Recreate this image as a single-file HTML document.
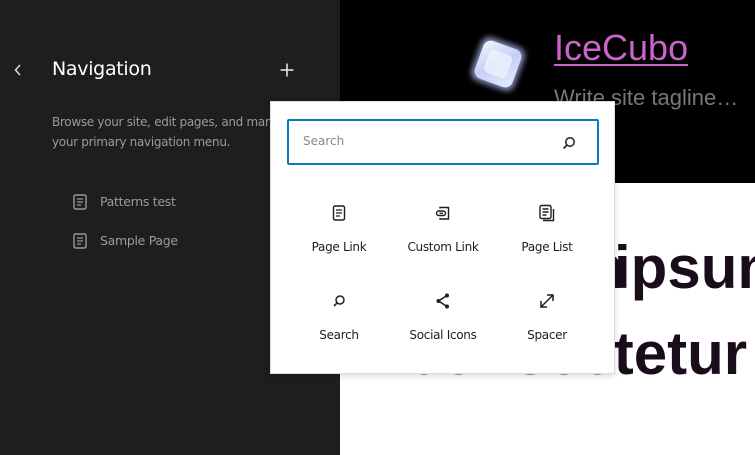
<!DOCTYPE html>
<html><head><meta charset="utf-8"><style>
*{margin:0;padding:0;box-sizing:border-box}
body{width:755px;height:455px;overflow:hidden;position:relative;background:#1e1e1e;font-family:"DejaVu Sans","Liberation Sans",sans-serif}
.a{position:absolute}
.side{left:0;top:0;width:340px;height:455px;background:#1e1e1e}
.hdr{left:340px;top:0;width:415px;height:183px;background:#000}
.main{left:340px;top:183px;width:415px;height:272px;background:#fff;overflow:hidden}
.big{font-family:"Liberation Sans",sans-serif;font-weight:bold;font-size:60px;color:#1a0d1a;white-space:nowrap}
.pop{left:270px;top:101px;width:345px;height:273px;background:#fff;border:1px solid #ddd;box-shadow:0 2px 6px rgba(0,0,0,.15)}
.sb{left:16px;top:17px;width:312px;height:46px;border:2px solid #0a7cbd;border-radius:2px}
.it{width:104px;text-align:center;font-size:12px;color:#1e1e1e;letter-spacing:-.3px}
.it svg{display:block;margin:0 auto 18px}
</style></head><body>
<div class="a side">
 <svg class="a" style="left:10px;top:62px" width="16" height="16" viewBox="0 0 16 16"><path d="M10 3 L5.5 8 L10 13" fill="none" stroke="#ddd" stroke-width="1.5"/></svg>
 <div class="a" style="left:52px;top:58px;font-size:19px;color:#fff;letter-spacing:-.3px">Navigation</div>
 <svg class="a" style="left:279px;top:62px" width="16" height="16" viewBox="0 0 16 16"><path d="M8 1.5V14.5M1.5 8H14.5" stroke="#eee" stroke-width="1.5"/></svg>
 <div class="a" style="left:52px;top:112px;font-size:12px;line-height:20px;color:#9a9a9a;white-space:nowrap;letter-spacing:-.3px">Browse your site, edit pages, and manage<br>your primary navigation menu.</div>
 <svg class="a" style="left:73px;top:194px" width="14" height="16" viewBox="0 0 14 16"><rect x="1" y="1" width="12" height="14" rx="1.5" fill="none" stroke="#999" stroke-width="1.4"/><path d="M4 5H10M4 8H10M4 11H8" stroke="#999" stroke-width="1.3"/></svg>
 <div class="a" style="left:100px;top:194px;font-size:12.5px;color:#9a9a9a;letter-spacing:-.3px">Patterns test</div>
 <svg class="a" style="left:73px;top:233px" width="14" height="16" viewBox="0 0 14 16"><rect x="1" y="1" width="12" height="14" rx="1.5" fill="none" stroke="#999" stroke-width="1.4"/><path d="M4 5H10M4 8H10M4 11H8" stroke="#999" stroke-width="1.3"/></svg>
 <div class="a" style="left:100px;top:233px;font-size:12.5px;color:#9a9a9a;letter-spacing:-.3px">Sample Page</div>
</div>
<div class="a hdr">
 <svg class="a" style="left:126px;top:32px" width="64" height="64" viewBox="0 0 64 64"><defs><filter id="g"><feGaussianBlur stdDeviation="3"/></filter><linearGradient id="l" x1="0" y1="0" x2="1" y2="1"><stop offset="0" stop-color="#f2f5ff"/><stop offset=".5" stop-color="#c4cff5"/><stop offset="1" stop-color="#e8edff"/></linearGradient></defs><g transform="rotate(20 32 32)"><rect x="9" y="9" width="46" height="46" rx="9" fill="#b8c4ff" filter="url(#g)" opacity=".7"/><rect x="12" y="12" width="40" height="40" rx="8" fill="url(#l)"/><rect x="20" y="20" width="24" height="24" rx="5" fill="#f4f6ff" opacity=".7"/></g></svg>
 <div class="a" style="left:214px;top:27px;font-family:'Liberation Sans',sans-serif;font-size:36px;color:#c964c9;text-decoration:underline;text-decoration-thickness:2px;text-underline-offset:4px">IceCubo</div>
 <div class="a" style="left:214px;top:85px;font-family:'Liberation Sans',sans-serif;font-size:22px;color:#777;white-space:nowrap">Write site tagline…</div>
</div>
<div class="a main">
 <div class="a big" style="left:100px;top:50px">Lorem</div>
 <div class="a big" style="left:274px;top:50px">ipsum</div>
 <div class="a big" style="left:67px;top:136px">consectetur</div>
</div>
<div class="a pop">
 <div class="a sb">
  <div class="a" style="left:14px;top:13px;font-size:12px;color:#888">Search</div>
  <svg class="a" style="left:272px;top:14px" width="16" height="16" viewBox="0 0 16 16"><circle cx="9" cy="7" r="4.2" fill="none" stroke="#1e1e1e" stroke-width="1.5"/><path d="M6 10L2.5 13.5" stroke="#1e1e1e" stroke-width="1.6"/></svg>
 </div>
 <div class="a it" style="left:16px;top:102px"><svg width="18" height="18" viewBox="0 0 18 18"><rect x="3.5" y="2" width="11" height="14" rx="1.5" fill="none" stroke="#1e1e1e" stroke-width="1.4"/><path d="M6 6H12M6 9H12M6 12H10" stroke="#1e1e1e" stroke-width="1.3"/></svg>Page Link</div>
 <div class="a it" style="left:120px;top:102px"><svg width="18" height="18" viewBox="0 0 18 18"><path d="M6 4.5V3.5H14.5V15H6V14" fill="none" stroke="#1e1e1e" stroke-width="1.4"/><rect x="2.5" y="7" width="9" height="4.5" rx="2.25" fill="none" stroke="#1e1e1e" stroke-width="1.4"/><path d="M5.5 9.25H9" stroke="#1e1e1e" stroke-width="1.3"/></svg>Custom Link</div>
 <div class="a it" style="left:224px;top:102px"><svg width="20" height="18" viewBox="0 0 20 18"><rect x="3" y="1.5" width="11" height="13" rx="1.5" fill="none" stroke="#1e1e1e" stroke-width="1.4"/><path d="M5.5 5H11.5M5.5 8H11.5M5.5 11H9.5M16.5 5V16.5H6" fill="none" stroke="#1e1e1e" stroke-width="1.4"/></svg>Page List</div>
 <div class="a it" style="left:16px;top:190px"><svg width="18" height="18" viewBox="0 0 18 18"><circle cx="10" cy="8" r="4" fill="none" stroke="#1e1e1e" stroke-width="1.5"/><path d="M7 11L4 14" stroke="#1e1e1e" stroke-width="1.6"/></svg>Search</div>
 <div class="a it" style="left:120px;top:190px"><svg width="18" height="18" viewBox="0 0 18 18"><path d="M13 3.5L4.5 9L13 14.5" fill="none" stroke="#1e1e1e" stroke-width="1.5"/><circle cx="13" cy="3.5" r="2" fill="#1e1e1e"/><circle cx="4.5" cy="9" r="2" fill="#1e1e1e"/><circle cx="13" cy="14.5" r="2" fill="#1e1e1e"/></svg>Social Icons</div>
 <div class="a it" style="left:224px;top:190px"><svg width="18" height="18" viewBox="0 0 18 18"><path d="M3 15L15 3M9 3H15V9M3 9V15H9" fill="none" stroke="#1e1e1e" stroke-width="1.5"/></svg>Spacer</div>
</div>
</body></html>
